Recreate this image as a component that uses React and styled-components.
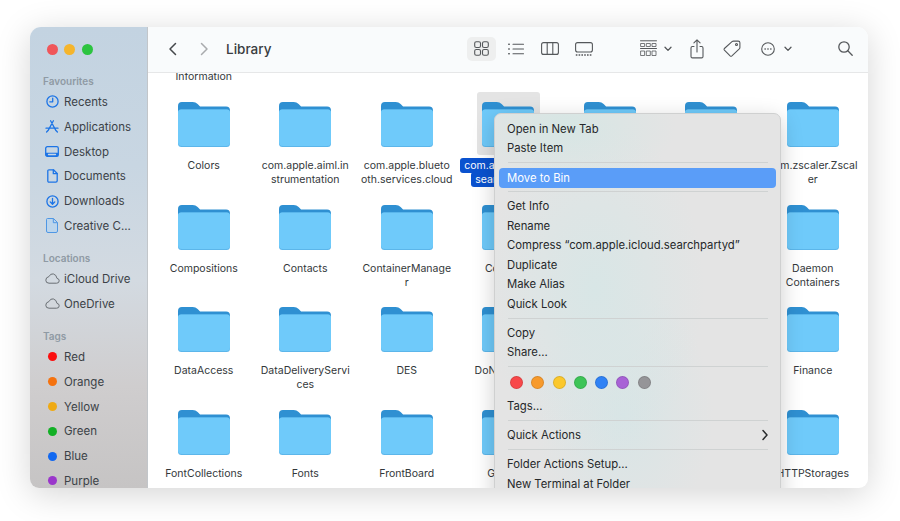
import React from "react";
import styled, { createGlobalStyle } from "styled-components";

const Global = createGlobalStyle`
  html, body { margin: 0; padding: 0; background: #fff; }
  body { font-family: Inter, "Liberation Sans", sans-serif; -webkit-font-smoothing: antialiased; }
`;
const Page = styled.div`
  width: 900px; height: 521px; box-sizing: border-box; padding: 27px 32px 33px 30px; overflow: hidden;
`;
const Win = styled.div`
  position: relative; display: flex; height: 461px; border-radius: 11px 11px 9px 9px; overflow: hidden;
  background: #fff; box-shadow: 0 6px 34px rgba(0,0,0,.17);
`;
const Sidebar = styled.aside`
  flex: 0 0 118px; box-sizing: border-box; border-right: 1px solid #c2c6ca; padding-top: 16.5px;
  background: linear-gradient(180deg, #c3d3e1 0%, #c8d6e2 30%, #d3dae1 55%, #cfcdce 78%, #c6c4c4 100%);
`;
const Lights = styled.div`display: flex; gap: 6.5px; padding-left: 16.5px; margin-bottom: 19.5px;`;
const Light = styled.span`width: 11px; height: 11px; border-radius: 50%; background: ${p => p.$c};`;
const Group = styled.section`margin-bottom: ${p => p.$mb}px;`;
const GroupTitle = styled.div`
  font-size: 10px; font-weight: 600; line-height: 14px; height: 14px; color: #8f9aa4; padding-left: 13px; margin-bottom: 1.6px;
`;
const SideItem = styled.div`
  display: flex; align-items: center; height: 24.8px; padding-left: 14px; gap: 4px;
  font-size: 11.5px; color: #3c4247; white-space: nowrap;
`;
const IconBox = styled.span`display: flex; align-items: center; justify-content: center; width: 16px; height: 16px; flex: none;`;
const Dot = styled.span`width: 9px; height: 9px; border-radius: 50%; background: ${p => p.$c};`;
const Main = styled.main`flex: 1; min-width: 0; position: relative; display: flex; flex-direction: column;`;
const Toolbar = styled.header`
  position: relative; z-index: 2; flex: 0 0 46px; box-sizing: border-box; display: flex; align-items: center; padding: 0 13px 2px 15px;
  background: #f9fbfc; border-bottom: 1px solid #e6e7e8;
`;
const Tool = styled.span`
  display: flex; align-items: center; justify-content: center; gap: ${p => p.$gap || 0}px; flex: none; height: 24px;
  width: ${p => p.$w || 20}px; margin-left: ${p => p.$ml || 0}px; border-radius: 5px;
  background: ${p => p.$on ? "#eeefef" : "transparent"};
`;
const Title = styled.h1`margin: 0 0 0 12px; font-size: 13.5px; font-weight: 500; color: #3a3d40;`;
const Views = styled.div`margin-left: auto; display: flex; gap: 5px;`;
const Grid = styled.div`
  display: grid; grid-template-columns: repeat(7, 101.5px); grid-template-rows: 23px repeat(4, 102.67px);
  margin-top: -3px; padding-left: 5px;
`;
const Cell = styled.div`display: flex; flex-direction: column; align-items: center; min-width: 0;`;
const Tile = styled.div`
  box-sizing: border-box; width: 63px; height: 63px; margin-top: -1px; padding-top: 10px; display: flex; justify-content: center; border-radius: 3px;
  background: ${p => p.$sel ? "#e4e4e4" : "transparent"};
`;
const Label = styled.div`
  margin-top: ${p => p.$top ? 0 : 4}px; font-size: 10.5px; line-height: 14px; color: #33373a; text-align: center; white-space: pre; 
`;
const SelText = styled.span`
  background: #0a52cf; color: #fff; padding: 1px 4px; border-radius: 3px; -webkit-box-decoration-break: clone; box-decoration-break: clone;
`;
const Menu = styled.div`
  position: absolute; z-index: 3; left: 464px; top: 86px; width: 287px; height: 420px; box-sizing: border-box; padding-top: 5px;
  border-radius: 7px; border: 1px solid #cfd0d0; box-shadow: 0 6px 22px rgba(0,0,0,.2);
  background:
    radial-gradient(ellipse 110px 170px at 35% 42%, #d8e6e6 0%, rgba(216,230,230,0) 100%),
    radial-gradient(ellipse 90px 130px at 45% 72%, #d8e5e6 0%, rgba(216,230,230,0) 100%),
    radial-gradient(ellipse 110px 60px at 25% 3%, #d6e6e4 0%, rgba(216,230,230,0) 100%),
    #e4e4e4;
`;
const MenuItem = styled.div`
  display: flex; align-items: center; justify-content: space-between; height: 19.5px; padding: 0 12px; 
  font-size: 11.3px; color: #26282a; white-space: nowrap;
`;
const HotItem = styled(MenuItem)`
  margin: 0 4px; padding: 0 8px; height: 20px; margin-bottom: -0.5px; border-radius: 4px; background: #5a9df8; color: #fff;
`;
const Sep = styled.div`
  height: 9.5px; margin: 0 12.5px; display: flex; align-items: center;
  &::after { content: ""; display: block; flex: 1; height: 1px; background: #cfd2d2; }
`;
const Swatches = styled.div`display: flex; gap: 8.3px; height: 25px; align-items: center; padding: 0 0 3px 15px; box-sizing: border-box;`;
const Swatch = styled.span`
  width: 13px; height: 13px; box-sizing: border-box; border-radius: 50%; background: ${p => p.$c}; border: 1px solid rgba(0,0,0,.12);
`;
const SubArrow = styled.span`display: flex; margin-right: -3px;`;

const ic = { fill: "none", stroke: "#55585b", strokeWidth: 1.1, strokeLinecap: "round", strokeLinejoin: "round" };
const sb = { fill: "none", stroke: "#1c74e6", strokeWidth: 1.3, strokeLinecap: "round", strokeLinejoin: "round" };

const Folder = () => (
  <svg width="52" height="45" viewBox="0 0 53 45" preserveAspectRatio="none">
    <path d="M0 7V4Q0 0 4 0H15Q18 0 20 2L22.5 4.5H49Q53 4.5 53 8.5V22H0Z" fill="#2f90d2" />
    <rect x="0" y="7.5" width="53" height="37.5" rx="3.5" fill="#5cb6ea" />
    <path d="M0 10.5Q0 7.5 3 7.5H50Q53 7.5 53 10.5V40Q53 44 49 44H4Q0 44 0 40Z" fill="#6fcafa" />
  </svg>
);
const Chev = ({ d, c }) => <svg width="12" height="16" viewBox="0 0 12 16"><path d={d} fill="none" stroke={c} strokeWidth="1.5" strokeLinecap="round" strokeLinejoin="round" /></svg>;
const Caret = () => <svg width="8" height="6" viewBox="0 0 8 6"><path d="M1 1.2L4 4.4L7 1.2" fill="none" stroke="#55585b" strokeWidth="1.3" strokeLinecap="round" strokeLinejoin="round" /></svg>;

const IconGrid = () => <svg width="15" height="15" viewBox="0 0 15 15" {...ic}><rect x=".7" y=".7" width="5.8" height="5.8" rx="1.6" /><rect x="8.5" y=".7" width="5.8" height="5.8" rx="1.6" /><rect x=".7" y="8.5" width="5.8" height="5.8" rx="1.6" /><rect x="8.5" y="8.5" width="5.8" height="5.8" rx="1.6" /></svg>;
const IconList = () => <svg width="16" height="12" viewBox="0 0 16 12" {...ic}><path d="M5 1.2H15.5M5 6H15.5M5 10.8H15.5" /><path d="M.8 1.2H1.2M.8 6H1.2M.8 10.8H1.2" strokeWidth="1.6" /></svg>;
const IconCols = () => <svg width="18" height="13" viewBox="0 0 18 13" {...ic}><rect x=".6" y=".6" width="16.8" height="11.8" rx="2" /><path d="M6.2 .6V12.4M11.8 .6V12.4" /></svg>;
const IconGallery = () => <svg width="18" height="14" viewBox="0 0 18 14" {...ic}><rect x=".6" y=".6" width="16.8" height="9.4" rx="2" /><path d="M.8 13H17.2" strokeWidth="1.3" strokeDasharray="1.6 1.2" strokeLinecap="butt" /></svg>;
const IconGroup = () => <svg width="17" height="17" viewBox="0 0 17 17" {...ic} strokeWidth="1"><path d="M.5 .8H16.5M.5 8.5H16.5" /><path d="M1 3.5h3.6v3H1zM6.7 3.5h3.6v3H6.7zM12.4 3.5h3.6v3h-3.6zM1 11h3.6v4.5H1zM6.7 11h3.6v4.5H6.7zM12.4 11h3.6v4.5h-3.6z" strokeWidth=".8" /></svg>;
const IconShare = () => <svg width="14" height="20" viewBox="0 0 14 20" {...ic}><path d="M4 7.5H2.4Q1 7.5 1 9V17.4Q1 18.9 2.4 18.9H11.6Q13 18.9 13 17.4V9Q13 7.5 11.6 7.5H10" /><path d="M7 13V1M3.9 3.9L7 .9L10.1 3.9" /></svg>;
const IconTag = () => <svg width="18" height="17" viewBox="0 0 18 17" {...ic}><path d="M10.5 1.1H15.2Q16.9 1.1 16.9 2.8V7.4Q16.9 8.2 16.3 8.8L8.9 15.8Q8 16.6 7.1 15.8L1.4 10.1Q.7 9.3 1.4 8.5L9 1.7Q9.7 1.1 10.5 1.1Z" /><circle cx="13.5" cy="4.5" r="1" /></svg>;
const IconMore = () => <svg width="14" height="14" viewBox="0 0 14 14" {...ic}><circle cx="7" cy="7" r="6.3" /><path d="M4 7h.3M6.85 7h.3M9.7 7h.3" strokeWidth="1.4" /></svg>;
const IconSearch = () => <svg width="15" height="15" viewBox="0 0 15 15" {...ic} strokeWidth="1.3"><circle cx="6" cy="6" r="5.2" /><path d="M9.8 9.8L14.2 14.2" /></svg>;

const SClock = () => <svg width="13" height="13" viewBox="0 0 13 13" {...sb}><circle cx="6.5" cy="6.5" r="5.6" /><path d="M6.7 3.2V6.8H3.8" /></svg>;
const SApps = () => <svg width="14" height="13" viewBox="0 0 14 13" {...sb}><path d="M8.4 .8L3.2 10.4M5.6 .8L10.8 10.4M1 8.2H13M1.6 12L3 10.5M12.4 12L11 10.5" /></svg>;
const SDesk = () => <svg width="14" height="11" viewBox="0 0 14 11" {...sb}><rect x=".7" y=".7" width="12.6" height="9.6" rx="1.6" /><path d="M.7 6.8H13.3V8.8Q13.3 10.3 11.8 10.3H2.2Q.7 10.3 .7 8.8Z" fill="#1c74e6" stroke="none" /><path d="M3.5 8.5H10.5" stroke="#c9d8e5" /></svg>;
const SDoc = () => <svg width="11" height="14" viewBox="0 0 11 14" {...sb}><path d="M2 .8H6.5L10.2 4.5V11.8Q10.2 13.2 8.8 13.2H2Q.8 13.2 .8 11.8V2Q.8 .8 2 .8Z" /><path d="M6.3 .8V4.7H10.2" /></svg>;
const SDown = () => <svg width="13" height="13" viewBox="0 0 13 13" {...sb}><circle cx="6.5" cy="6.5" r="5.6" /><path d="M6.5 3.3V9M4.2 6.9L6.5 9.3L8.8 6.9" /></svg>;
const SFile = () => <svg width="12" height="15" viewBox="0 0 12 15"><path d="M1.5 .5H7.5L11.5 4.5V13Q11.5 14.5 10 14.5H2Q.5 14.5 .5 13V1.5Q.5 .5 1.5 .5Z" fill="#bcd5ec" stroke="#4f97e4" /><path d="M7.3 .6V4.7H11.4" fill="none" stroke="#4f97e4" /></svg>;
const SCloud = () => <svg width="15" height="11" viewBox="0 0 15 11"><path d="M4 10.2H11.6Q14.2 10.2 14.2 7.8Q14.2 5.7 12 5.4Q11.5 1.8 8.3 .9Q5.4 .4 3.9 3.6Q.8 4.3 .8 7.2Q.8 10.2 4 10.2Z" fill="none" stroke="#6a6f74" strokeWidth="1" strokeLinejoin="round" /></svg>;

const favourites = [["Recents", SClock], ["Applications", SApps], ["Desktop", SDesk], ["Documents", SDoc], ["Downloads", SDown], ["Creative C...", SFile]];
const locations = ["iCloud Drive", "OneDrive"];
const tags = [["Red", "#fb0f0f"], ["Orange", "#f5720f"], ["Yellow", "#efaa14"], ["Green", "#12b025"], ["Blue", "#1268f0"], ["Purple", "#9a36cb"]];

const rows = [
  ["Colors", "com.apple.aiml.in\nstrumentation", "com.apple.blueto\noth.services.cloud", "com.apple.icloud.\nsearchpartyd", "com.apple.Safari", "com.crashlytics", "com.zscaler.Zscal\ner"],
  ["Compositions", "Contacts", "ContainerManage\nr", "CoreData", "CoreFollowUp", "Caches", "Daemon\nContainers"],
  ["DataAccess", "DataDeliveryServi\nces", "DES", "DoNotDisturb", "Dictionaries", "Favorites", "Finance"],
  ["FontCollections", "Fonts", "FrontBoard", "GameKit", "Google", "Group", "HTTPStorages"],
];
const swatches = ["#f8484a", "#f79a2c", "#fbc82c", "#3dc457", "#2f82f5", "#a862d6", "#959598"];

export default function App() {
  return (
    <Page>
      <Global />
      <Win>
        <Sidebar>
          <Lights><Light $c="#f0565a" /><Light $c="#f5b52c" /><Light $c="#2cc440" /></Lights>
          <Group $mb={12.6}>
            <GroupTitle>Favourites</GroupTitle>
            {favourites.map(([t, I]) => <SideItem key={t}><IconBox><I /></IconBox>{t}</SideItem>)}
          </Group>
          <Group $mb={12.8}>
            <GroupTitle>Locations</GroupTitle>
            {locations.map(t => <SideItem key={t}><IconBox><SCloud /></IconBox>{t}</SideItem>)}
          </Group>
          <Group>
            <GroupTitle>Tags</GroupTitle>
            {tags.map(([t, c]) => <SideItem key={t}><IconBox><Dot $c={c} /></IconBox>{t}</SideItem>)}
          </Group>
        </Sidebar>
        <Main>
          <Toolbar>
            <Tool><Chev d="M8.5 2.5L3 8L8.5 13.5" c="#45484b" /></Tool>
            <Tool $ml={11}><Chev d="M3.5 2.5L9 8L3.5 13.5" c="#a9abad" /></Tool>
            <Title>Library</Title>
            <Views>
              <Tool $w={29} $on><IconGrid /></Tool>
              <Tool $w={29}><IconList /></Tool>
              <Tool $w={29}><IconCols /></Tool>
              <Tool $w={29}><IconGallery /></Tool>
            </Views>
            <Tool $w={35} $ml={40} $gap={7}><IconGroup /><Caret /></Tool>
            <Tool $ml={14}><IconShare /></Tool>
            <Tool $ml={15}><IconTag /></Tool>
            <Tool $w={33} $ml={18} $gap={9}><IconMore /><Caret /></Tool>
            <Tool $ml={42}><IconSearch /></Tool>
          </Toolbar>
          <Grid>
            <Cell><Label $top>Information</Label></Cell>
            {Array.from({ length: 6 }, (_, i) => <Cell key={i} />)}
            {rows.flat().map((t, i) => (
              <Cell key={t}>
                <Tile $sel={i === 3}><Folder /></Tile>
                <Label>{i === 3 ? <SelText>{t}</SelText> : t}</Label>
              </Cell>
            ))}
          </Grid>
        </Main>
        <Menu>
          <MenuItem>Open in New Tab</MenuItem>
          <MenuItem>Paste Item</MenuItem>
          <Sep />
          <HotItem>Move to Bin</HotItem>
          <Sep />
          <MenuItem>Get Info</MenuItem>
          <MenuItem>Rename</MenuItem>
          <MenuItem>Compress “com.apple.icloud.searchpartyd”</MenuItem>
          <MenuItem>Duplicate</MenuItem>
          <MenuItem>Make Alias</MenuItem>
          <MenuItem>Quick Look</MenuItem>
          <Sep />
          <MenuItem>Copy</MenuItem>
          <MenuItem>Share...</MenuItem>
          <Sep />
          <Swatches>{swatches.map(c => <Swatch key={c} $c={c} />)}</Swatches>
          <MenuItem>Tags...</MenuItem>
          <Sep />
          <MenuItem>Quick Actions<SubArrow><Chev d="M4 3.5L8 8L4 12.5" c="#2a2c2e" /></SubArrow></MenuItem>
          <Sep />
          <MenuItem>Folder Actions Setup...</MenuItem>
          <MenuItem>New Terminal at Folder</MenuItem>
        </Menu>
      </Win>
    </Page>
  );
}
